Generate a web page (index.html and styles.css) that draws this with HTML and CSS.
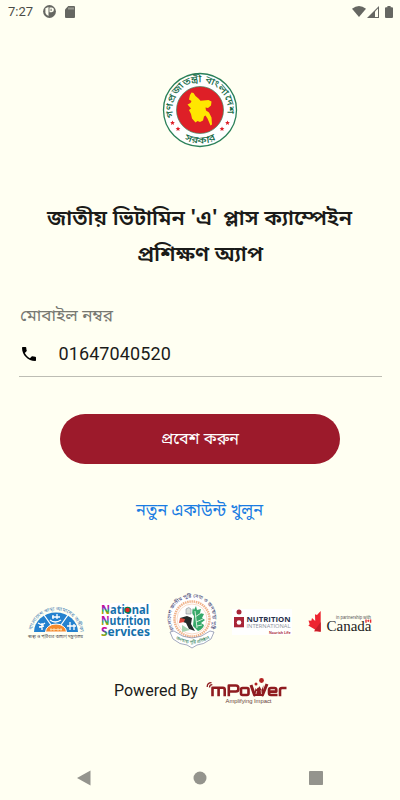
FILE: index.html
```html
<!DOCTYPE html>
<html lang="bn">
<head>
<meta charset="utf-8">
<title>প্রশিক্ষণ অ্যাপ</title>
<link rel="stylesheet" href="styles.css">
</head>
<body>
<div class="screen">
  <header class="status">
    <span class="time">7:27</span>
    <svg class="s-app" viewBox="0 0 13 13"><circle cx="6.5" cy="6.5" r="6.4" fill="#666762"/><path d="M2.400 3.200 5.500 2v9L3.600 9.800 2.400 8Z" fill="#fffff2"/><path d="M6.500 2.400h2a2.400 2.400 0 0 1 0 4.900h-2Z" fill="#fffff2"/><path d="M7.600 3.700h1v2.200h-1Z" fill="#666762"/></svg>
    <svg class="s-sd" viewBox="0 0 10 12"><path d="M3.200 0H9q1 0 1 1v10q0 1-1 1H1q-1 0-1-1V3.400Z" fill="#666762"/><path d="M3.500 1.500h1v2h-1zM5.500 1.500h1v2h-1zM7.500 1.500h1v2h-1z" fill="#c9cabf"/></svg>
    <span class="grow"></span>
    <svg class="s-wifi" viewBox="0 0 14 11"><path d="M0 2.800Q7-2.800 14 2.800L7 11Z" fill="#666762"/></svg>
    <svg class="s-cell" viewBox="0 0 12 12"><path d="M0 12 12 0v12Z" fill="#666762"/><path d="M8 5.600 11 2.600V11H8Z" fill="#fffff2"/></svg>
    <svg class="s-bat" viewBox="0 0 8 12"><path d="M2.400 0h3.200v1.200H7q1 0 1 1V11q0 1-1 1H1q-1 0-1-1V2.200q0-1 1-1h1.400Z" fill="#666762"/></svg>
  </header>

  <svg class="seal" viewBox="0 0 76 76">
    <defs><path id="sealTop" d="M11.600 45.500A27.500 27.500 0 1 1 64.400 45.500"/><path id="sealLow" d="M13 60A33 33 0 0 0 63 60"/></defs>
    <circle cx="38" cy="38" r="36.500" fill="#fff" stroke="#2a8058" stroke-width="1.300"/>
    <circle cx="38" cy="38" r="23.500" fill="#de1f27" stroke="#438761" stroke-width=".7"/>
    <path fill="#ffe600" d="m28 23 1.500-2.500 2 .5 2 3 3 2.500 2 2.300 8-.8 3 1.500-.5 4-3 2.500-2.500-.5.5 3 3 2 2.500 5 .5 7-1.500 1-3-7-2-3-1.500 1-1 4-3 1.500-2.500-1-2 1.500-3.500-4-1-4.500-2-4 2-1.500-3.500-4 3-1.500 1-2-2.500-1.500Z"/>
    <g fill="#176b47" class="seal-text"><text><textPath href="#sealTop" textLength="98" lengthAdjust="spacingAndGlyphs">গণপ্রজাতন্ত্রী বাংলাদেশ</textPath></text><text><textPath href="#sealLow" startOffset="12" textLength="33" lengthAdjust="spacingAndGlyphs">সরকার</textPath></text></g>
    <g fill="#de1f27"><path id="star" d="m10.500 48.500.7 1.500 1.700.2-1.300 1.100.4 1.700-1.500-.9-1.500.9.400-1.700-1.300-1.100 1.700-.2Z"/><use href="#star" x="5.500" y="6"/><use href="#star" x="55" y="0"/><use href="#star" x="49.500" y="6"/></g>
  </svg>

  <h1 class="title">
    <svg viewBox="0 0 400 72"><text x="47" y="26" textLength="305" lengthAdjust="spacingAndGlyphs">জাতীয় ভিটামিন 'এ' প্লাস ক্যাম্পেইন</text><text x="137" y="61.500" textLength="126" lengthAdjust="spacingAndGlyphs">প্রশিক্ষণ অ্যাপ</text></svg>
  </h1>

  <section class="field">
    <svg class="label" viewBox="0 0 362 30"><text x="1" y="21" textLength="93" lengthAdjust="spacingAndGlyphs">মোবাইল নম্বর</text></svg>
    <div class="phone">
      <svg viewBox="3 3 18 18"><path d="M6.620 10.790c1.440 2.830 3.760 5.140 6.590 6.590l2.200-2.200c.27-.27.670-.36 1.020-.24 1.120.37 2.330.57 3.570.57.550 0 1 .45 1 1V20c0 .55-.45 1-1 1-9.390 0-17-7.610-17-17 0-.55.450-1 1-1h3.500c.55 0 1 .45 1 1 0 1.250.200 2.450.570 3.570.110.350.030.740-.250 1.020l-2.200 2.200z"/></svg>
      <span>01647040520</span>
    </div>
  </section>

  <div class="button"><svg viewBox="0 0 280 50"><text x="101" y="30" textLength="78" lengthAdjust="spacingAndGlyphs">প্রবেশ করুন</text></svg></div>
  <a class="link"><svg viewBox="0 0 280 36"><text x="76" y="24" textLength="127" lengthAdjust="spacingAndGlyphs">নতুন একাউন্ট খুলুন</text></svg></a>

  <section class="partners">
    <svg class="p-health" viewBox="0 0 58 42">
      <defs><path id="hArc" d="M5 30A24.500 24.500 0 0 1 53 30"/></defs>
      <path d="M7 32A22 19.500 0 0 1 51 32Z" fill="#2582cf"/>
      <path d="m29 32-12-17M29 32 41 15" stroke="#fff" stroke-width="1.300"/>
      <path d="M18.500 32A10.500 8 0 0 1 39.500 32Z" fill="#f58a2d" stroke="#fff"/>
      <g fill="none" stroke="#fff" stroke-width="1.300"><path d="m11 23 4 2 3-2M15 23v7M12 27l5-1"/><path d="M26 15v4m4-5v5M23 20q5 4 11 0M25 17h8"/><path d="M43 22v8m4-6v6M40 26h9"/></g>
      <path d="M23 29.500h12M24 28v3m3-3v3m4-3v3m3-3v3" stroke="#ffe2b8" stroke-width=".8"/>
      <text class="h-arc"><textPath href="#hArc" textLength="72" lengthAdjust="spacingAndGlyphs">বাংলাদেশ স্বাস্থ্য আমাদের অঙ্গীকার</textPath></text>
      <text x="1" y="38" class="h-low" textLength="55" lengthAdjust="spacingAndGlyphs">স্বাস্থ্য ও পরিবার কল্যাণ মন্ত্রণালয়</text>
    </svg>
    <svg class="p-nns" viewBox="0 0 51 37">
      <defs><linearGradient id="rain" x2="0" y2="1"><stop offset=".2" stop-color="#e5007e"/><stop offset=".45" stop-color="#8a2bc0"/><stop offset=".6" stop-color="#20a45a"/><stop offset=".8" stop-color="#b8a000"/></linearGradient></defs>
      <rect width="51" height="37" fill="#fff"/>
      <g class="nns"><text x="1" y="10.500" textLength="48" lengthAdjust="spacingAndGlyphs"><tspan fill="url(#rain)">N</tspan>ational</text><text x="1" y="21.700" textLength="49" lengthAdjust="spacingAndGlyphs"><tspan fill="url(#rain)">N</tspan>utrition</text><text x="1" y="33" textLength="49" lengthAdjust="spacingAndGlyphs"><tspan fill="url(#rain)">S</tspan>ervices</text></g>
      <circle cx="27.500" cy="7" r="3.300" fill="#087f47"/><circle cx="27.500" cy="7" r="2.200" fill="#e32425"/>
    </svg>
    <svg class="p-round" viewBox="0 0 50 56">
      <defs><path id="rArc" d="M7.500 37A21 21 0 1 1 42.500 37"/><path id="rLow" d="M6 44Q25 57 45 44"/></defs>
      <circle cx="25" cy="26" r="23.500" fill="#fff"/>
      <circle cx="25" cy="26" r="17.500" fill="none" stroke="#f1b48c" stroke-width="2.500" stroke-dasharray="1.500 .7"/>
      <circle cx="25" cy="26" r="15" fill="#fff" stroke="#f6cdb2" stroke-width=".7"/>
      <path d="M26 15q-2 5 1 8l-1 10 5 5q5-2 6-6l-3-2 4-3-3-2 2-4-4-1 1-4-4 1-1-4-2 4Z" fill="#37a96a"/><path d="m28 18 2 17m-2-11 6-4m-5 9 7-3m-6 7 5-1" stroke="#d3edda"/>
      <path d="m13 25 7-2 5 2-1 6 4 7-6-2-3-6-6-2Z" fill="#242b2b"/><path d="m13 25 5 1-1 3-5 1Z" fill="#d9473d"/><path d="M19 16q3-3 5 0v5h-5Z" fill="#d9ded9" stroke="#778" stroke-width=".5"/><path d="m15 32 8 5-8 2Z" fill="#a4d3b0"/>
      <text class="r-arc"><textPath href="#rArc" textLength="88" lengthAdjust="spacingAndGlyphs">বাংলাদেশ জাতীয় পুষ্টি সেবা ও জনস্বাস্থ্য পুষ্টি</textPath></text>
      <path d="m3 39 4-1q18 14 36 0l4 1-3 7q-8 6-14 6l-5 3-5-3q-7 0-14-6Z" fill="#fff" stroke="#667196" stroke-width=".6"/>
      <text class="r-low"><textPath href="#rLow" startOffset="3" textLength="36" lengthAdjust="spacingAndGlyphs">জনস্বাস্থ্য পুষ্টি প্রতিষ্ঠান</textPath></text>
    </svg>
    <svg class="p-ni" viewBox="0 0 60 28">
      <rect width="60" height="26" y="2" fill="#fff"/><circle cx="7" cy="5" r="2.500" fill="#a82537"/><rect x="2" y="10" width="10" height="10.300" fill="#a82537"/><circle cx="7" cy="15.500" r="2.300" fill="#fff"/>
      <text x="14.500" y="15.400" class="ni1" textLength="44" lengthAdjust="spacingAndGlyphs">NUTRITION</text><text x="14.500" y="20.600" class="ni2" textLength="44" lengthAdjust="spacingAndGlyphs">INTERNATIONAL</text><text x="37" y="26.600" class="ni3" textLength="21.500" lengthAdjust="spacingAndGlyphs">Nourish Life</text>
    </svg>
    <svg class="p-ca" viewBox="0 0 66 26">
      <path d="M12.700 3 9 7 7 6.200 7.200 13 4 10l-.7 2.700L.5 12.500l1.200 3.700L.3 17.500 7 21.500l-.8 2 6.500-.3Z" fill="#ed2530"/>
      <path d="M12.700 3v21l-6-1.500 1-1.500 5-7Z" fill="#c41d29"/>
      <text x="28" y="10.500" class="ca1" textLength="35" lengthAdjust="spacingAndGlyphs">in partnership with</text><text x="18.500" y="23.300" class="ca2" textLength="45" lengthAdjust="spacingAndGlyphs">Canada</text>
      <path d="M57.300 11.500h1.400v3.200h-1.400zM61.900 11.500h1.400v3.200h-1.400z" fill="#e42c34"/><path d="m60.300 11.300.5.9.6-.2-.3 1.400-.8.700-.8-.7-.3-1.400.6.2Z" fill="#e42c34"/>
    </svg>
  </section>

  <footer class="powered">
    <span>Powered By</span>
    <svg viewBox="0 0 82 28">
      <g fill="none" stroke="#8f1c20"><path d="M1.200 11q0-4.300 4.300-4.300M3.500 11.500q0-2.800 2.800-2.800" stroke-width="1.300"/><g stroke-width="2.600" stroke-linejoin="round"><path d="M6.500 20.300v-8.500H17q1.700 0 1.700 1.700v6.800M12.600 12v8.300"/><path d="M22.800 20.300V9.500h7q2.500 0 2.500 2.200v1.600q0 2.200-2.500 2.200h-7"/><rect x="35" y="12" width="7.500" height="7" rx="1.500"/><path d="m45 9 3.500 10 4-6 4 6 4.500-11" stroke-width="3"/><path d="M71.500 19H65q-2 0-2-2v-3q0-2 2-2h3.500q1.800 0 1.800 1.800v1.800H63"/><path d="M74 20.300V14q0-2 2-2h4.500"/></g></g>
      <path d="m48 20 1.500-8 2 3 2-5 2 4 2-5-1 11Z" fill="#8f1c20"/><circle cx="55.500" cy="4.500" r="2.400" fill="#b32220"/><circle cx="50" cy="8" r="1.500" fill="#b32220"/>
      <path d="m50.700 15-.7 3m5-4 .5 4" stroke="#fff3e6" stroke-width=".7"/>
      <text x="19.500" y="26.500" textLength="46" lengthAdjust="spacingAndGlyphs">Amplifying Impact</text>
    </svg>
  </footer>

  <nav class="nav">
    <svg viewBox="0 0 14 16"><path d="M0 8 13.500.5v15Z"/></svg>
    <svg viewBox="0 0 14 16"><circle cx="7" cy="8" r="6.500"/></svg>
    <svg viewBox="0 0 14 16"><rect y="1" width="14" height="14" rx=".8"/></svg>
  </nav>
</div>
</body>
</html>
```
FILE: styles.css
```css
* { box-sizing: border-box; }
body { margin: 0; background: #fffff2; font-family: Roboto, "Noto Sans Bengali", "Noto Sans", sans-serif; color: #1b1b19; }
svg { display: block; flex: none; overflow: visible; }
svg text { font-family: "Noto Sans Bengali", "Noto Sans", sans-serif; }
.screen { width: 400px; height: 800px; display: flex; flex-direction: column; align-items: center; overflow: hidden; }
.status { width: 400px; height: 23px; padding: 0 7px 0 8px; display: flex; align-items: center; }
.time { font-size: 13px; width: 35px; color: #4a4b47; }
.s-app { width: 13px; height: 13px; }
.s-sd { width: 10px; height: 12px; margin-left: 9px; }
.grow { flex: 1; }
.s-wifi { width: 14px; height: 11px; }
.s-cell { width: 12px; height: 12px; margin-left: 1px; }
.s-bat { width: 8px; height: 12px; margin-left: 6px; }
.seal { width: 76px; height: 76px; margin-top: 49px; }
.seal-text text { font-size: 9.5px; font-weight: 500; }
.title { margin: 51px 0 0; width: 400px; height: 72px; }
.title svg { width: 400px; height: 72px; }
.title text { font-size: 21px; font-weight: 600; fill: #1b1b19; }
.field { width: 363px; height: 77px; margin-top: 29px; border-bottom: 1px solid #bdbdb4; }
.label { width: 362px; height: 30px; }
.label text { font-size: 16px; fill: #777872; }
.phone { height: 47px; display: flex; align-items: center; padding-left: 3px; font-size: 18px; }
.phone svg { width: 14px; height: 14px; }
.phone span { margin-left: 23px; letter-spacing: .1px; }
.button { margin-top: 37px; width: 280px; height: 50px; border-radius: 25px; background: #9c1a2b; }
.button svg { width: 280px; height: 50px; }
.button text { font-size: 16px; fill: #fff; }
.link { margin-top: 28px; }
.link svg { width: 280px; height: 36px; }
.link text { font-size: 17px; fill: #197ce2; }
.partners { width: 400px; height: 60px; margin-top: 63px; padding-left: 27px; display: flex; align-items: center; }
.p-health { width: 58px; height: 42px; }
.h-arc { font-size: 5px; fill: #4d84b5; }
.h-low { font-size: 5px; fill: #444; }
.p-nns { width: 51px; height: 37px; margin-left: 15px; }
svg .nns text { font: 700 11.5px "Noto Sans", sans-serif; fill: #1670ad; }
.p-round { width: 50px; height: 56px; margin-left: 16px; }
.r-arc { font-size: 5px; fill: #34366f; }
.r-low { font-size: 4.5px; fill: #28784d; }
.p-ni { width: 60px; height: 28px; margin-left: 15px; }
svg .ni1 { font: 700 7.5px "Open Sans", sans-serif; fill: #26304b; }
svg .ni2 { font: 5.5px "Open Sans", sans-serif; fill: #8d929c; }
svg .ni3 { font: 700 4px "Open Sans", sans-serif; fill: #ac3442; }
.p-ca { width: 66px; height: 26px; margin-left: 16px; }
svg .ca1 { font: 4.5px "Liberation Sans", sans-serif; fill: #555; }
svg .ca2 { font: 15px "Liberation Serif", serif; fill: #222; }
.powered { width: 400px; height: 32px; margin-top: 23px; padding-left: 114px; display: flex; align-items: center; font-size: 16px; }
.powered span { width: 92px; white-space: nowrap; }
.powered svg { width: 82px; height: 28px; }
.powered text { font: 6px "Liberation Sans", sans-serif; fill: #663b38; }
.nav { width: 400px; height: 44px; margin-top: auto; padding: 0 77px; display: flex; justify-content: space-between; align-items: center; fill: #94948d; }
.nav svg { width: 14px; height: 16px; }
```
